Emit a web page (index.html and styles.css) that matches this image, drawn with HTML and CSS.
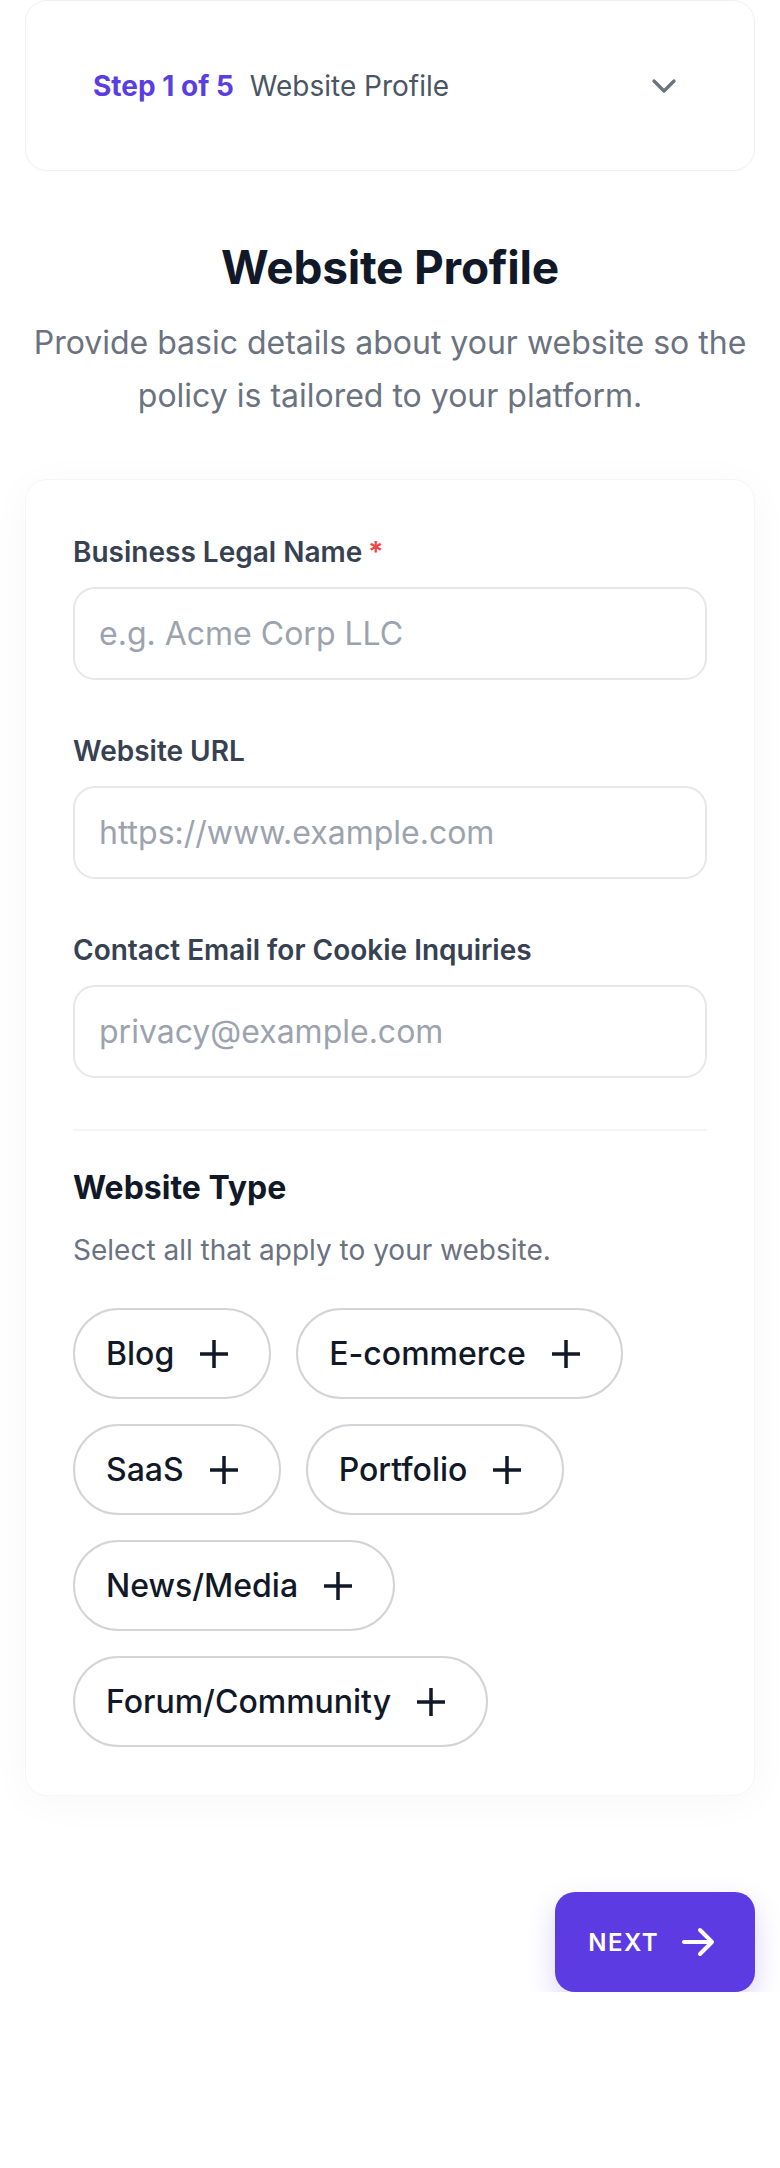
FILE: index.html
```html
<!DOCTYPE html>
<html lang="en">
<head>
<meta charset="utf-8">
<title>Website Profile</title>
<link rel="stylesheet" href="styles.css">
</head>
<body>
<div class="page">
  <div class="step-card">
    <div class="step-label">
      <span class="step-num">Step 1 of 5</span>
      <span class="step-name">Website Profile</span>
    </div>
    <svg class="chevron" viewBox="0 0 24 24" fill="none" stroke="currentColor" stroke-width="2" stroke-linecap="round" stroke-linejoin="round"><path d="M6 9l6 6 6-6"/></svg>
  </div>

  <header class="intro">
    <h1 class="intro-title">Website Profile</h1>
    <p class="intro-text">Provide basic details about your website so the policy is tailored to your platform.</p>
  </header>

  <form class="form-card">
    <div class="fields">
      <div class="field">
        <label class="field-label">Business Legal Name<span class="req">*</span></label>
        <input class="field-input" type="text" placeholder="e.g. Acme Corp LLC">
      </div>
      <div class="field">
        <label class="field-label">Website URL</label>
        <input class="field-input" type="text" placeholder="https://www.example.com">
      </div>
      <div class="field">
        <label class="field-label">Contact Email for Cookie Inquiries</label>
        <input class="field-input" type="text" placeholder="privacy@example.com">
      </div>
    </div>

    <div class="divider"></div>

    <h2 class="section-title">Website Type</h2>
    <p class="section-hint">Select all that apply to your website.</p>

    <div class="chips">
      <button type="button" class="chip">Blog<svg class="chip-icon" viewBox="0 0 24 24" fill="none" stroke="currentColor" stroke-width="1.75"><path d="M12 5v14M5 12h14"/></svg></button>
      <button type="button" class="chip">E-commerce<svg class="chip-icon" viewBox="0 0 24 24" fill="none" stroke="currentColor" stroke-width="1.75"><path d="M12 5v14M5 12h14"/></svg></button>
      <button type="button" class="chip">SaaS<svg class="chip-icon" viewBox="0 0 24 24" fill="none" stroke="currentColor" stroke-width="1.75"><path d="M12 5v14M5 12h14"/></svg></button>
      <button type="button" class="chip">Portfolio<svg class="chip-icon" viewBox="0 0 24 24" fill="none" stroke="currentColor" stroke-width="1.75"><path d="M12 5v14M5 12h14"/></svg></button>
      <button type="button" class="chip">News/Media<svg class="chip-icon" viewBox="0 0 24 24" fill="none" stroke="currentColor" stroke-width="1.75"><path d="M12 5v14M5 12h14"/></svg></button>
      <button type="button" class="chip">Forum/Community<svg class="chip-icon" viewBox="0 0 24 24" fill="none" stroke="currentColor" stroke-width="1.75"><path d="M12 5v14M5 12h14"/></svg></button>
    </div>
  </form>

  <div class="actions">
    <button type="button" class="next-btn">NEXT<svg class="next-icon" viewBox="0 0 24 24" fill="none" stroke="currentColor" stroke-width="2" stroke-linecap="round" stroke-linejoin="round"><path d="M5 12h14M13 6l6 6-6 6"/></svg></button>
  </div>
</div>
</body>
</html>
```

FILE: styles.css
```css
* { box-sizing: border-box; }

html, body {
  margin: 0;
  padding: 0;
  background: #ffffff;
}

body {
  font-family: Inter, "Noto Sans", "Liberation Sans", sans-serif;
  color: #111827;
}

.page {
  padding: 0 25px;
  display: flex;
  flex-direction: column;
}

/* Step card */
.step-card {
  height: 171px;
  border: 1px solid #f0f0f2;
  border-radius: 22px;
  background: #fff;
  display: flex;
  align-items: center;
  justify-content: space-between;
  padding: 0 70px 0 67px;
  box-shadow: 0 1px 3px rgba(0,0,0,0.02);
}

.step-label {
  display: flex;
  align-items: baseline;
  gap: 16px;
  font-size: 28px;
  line-height: 36px;
}

.step-num {
  color: #5b3ee0;
  font-weight: 700;
}

.step-name {
  color: #4b5563;
  font-weight: 400;
}

.chevron {
  width: 40px;
  height: 40px;
  color: #6b7280;
}

/* Intro */
.intro {
  margin-top: 68px;
  text-align: center;
}

.intro-title {
  margin: 0;
  font-size: 46px;
  line-height: 56px;
  font-weight: 700;
  letter-spacing: -0.005em;
  color: #111827;
}

.intro-text {
  margin: 21px 0 0;
  font-size: 32px;
  line-height: 53px;
  color: #6b7280;
}

/* Form card */
.form-card {
  margin-top: 57px;
  background: #fff;
  border: 1px solid #f6f6f7;
  border-radius: 22px;
  padding: 52px 47px 48px;
  box-shadow: 0 6px 40px rgba(0,0,0,0.035);
  display: flex;
  flex-direction: column;
}

.fields {
  display: flex;
  flex-direction: column;
  gap: 51px;
}

.field {
  display: flex;
  flex-direction: column;
  gap: 15px;
}

.field-label {
  font-size: 28px;
  line-height: 40px;
  font-weight: 600;
  color: #374151;
}

.req {
  color: #ef4444;
  margin-left: 6px;
}

.field-input {
  height: 93px;
  width: 100%;
  border: 2px solid #e5e7eb;
  border-radius: 22px;
  padding: 0 24px;
  font-family: inherit;
  font-size: 32px;
  color: #111827;
  background: #fff;
  outline: none;
}

.field-input::placeholder {
  color: #9ca3af;
}

.divider {
  height: 2px;
  background: #f3f4f6;
  margin: 51px 0 37px;
}

.section-title {
  margin: 0;
  font-size: 32px;
  line-height: 40px;
  font-weight: 700;
  color: #111827;
}

.section-hint {
  margin: 24px 0 0;
  font-size: 28px;
  line-height: 36px;
  color: #6b7280;
}

.chips {
  margin-top: 40px;
  display: flex;
  flex-wrap: wrap;
  gap: 25px;
}

.chip {
  height: 91px;
  display: inline-flex;
  align-items: center;
  gap: 16px;
  padding: 0 31px;
  border: 2px solid #d4d4d8;
  border-radius: 999px;
  background: #fff;
  font-family: inherit;
  font-size: 32px;
  font-weight: 500;
  color: #111827;
}

.chip-icon {
  width: 48px;
  height: 48px;
  flex: none;
}

/* Actions */
.actions {
  margin-top: 96px;
  display: flex;
  justify-content: flex-end;
}

.next-btn {
  height: 100px;
  display: inline-flex;
  align-items: center;
  gap: 15px;
  padding: 0 33px 0 33px;
  border: none;
  border-radius: 20px;
  background: #5c3be3;
  color: #fff;
  font-family: inherit;
  font-size: 24px;
  font-weight: 600;
  letter-spacing: 0.06em;
  box-shadow: 0 12px 28px rgba(92,59,227,0.22);
}

.next-icon {
  width: 48px;
  height: 48px;
  flex: none;
}
```
